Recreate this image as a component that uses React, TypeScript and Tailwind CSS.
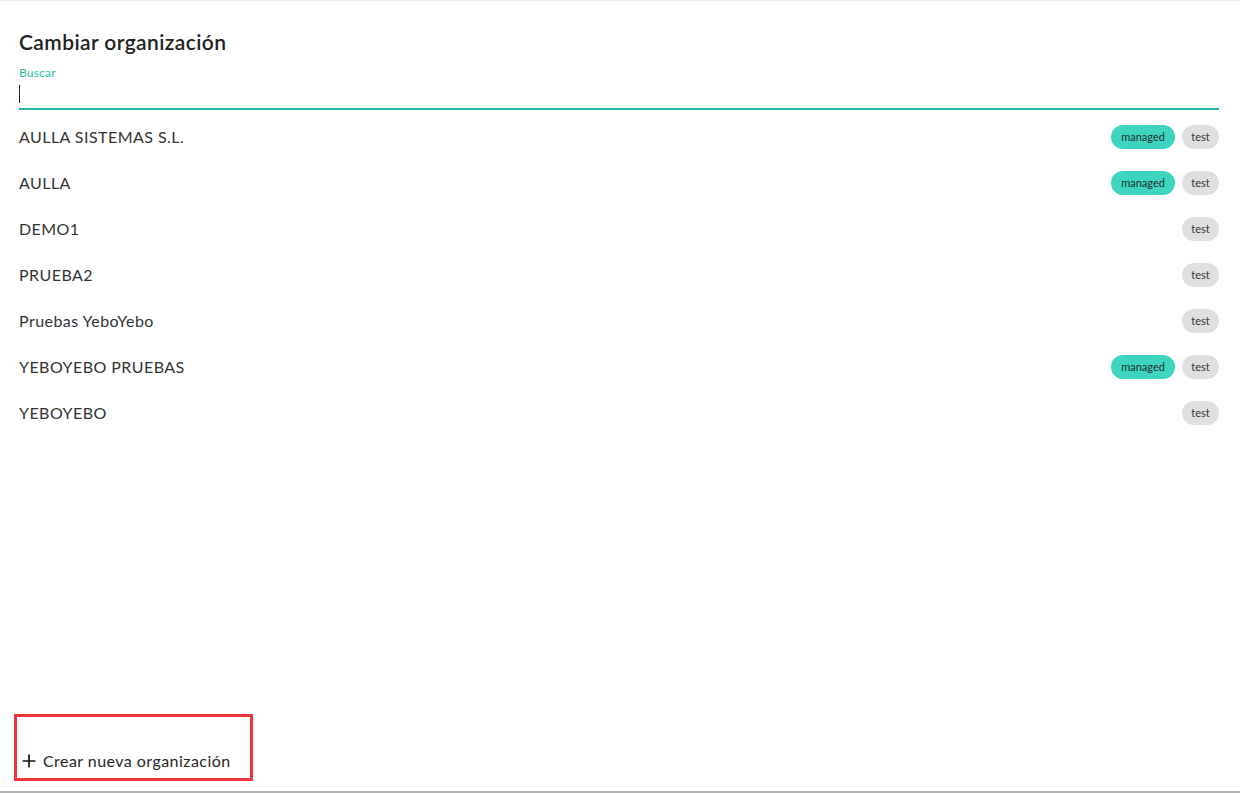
import { Plus } from "lucide-react";

const ORGS = [
  { name: "AULLA SISTEMAS S.L.", managed: true },
  { name: "AULLA", managed: true },
  { name: "DEMO1", managed: false },
  { name: "PRUEBA2", managed: false },
  { name: "Pruebas YeboYebo", managed: false },
  { name: "YEBOYEBO PRUEBAS", managed: true },
  { name: "YEBOYEBO", managed: false },
];

export default function App() {
  return (
    <div
      className="h-[794px] w-full flex flex-col bg-white text-[#262626] border-t border-[#ececec]"
      style={{ fontFamily: "Lato, 'Open Sans', sans-serif" }}
    >
      <div className="flex-1 flex flex-col pl-[19px] pr-[21px] pt-[28px]">
        {/* título */}
        <h1 className="text-[21px] font-semibold leading-[26px] tracking-[0.4px] text-[#222]">Cambiar organización</h1>

        {/* buscador */}
        <label className="mt-[11px] block">
          <span className="block text-[12px] leading-[14px] tracking-[0.2px] text-[#2bbfa9]">Buscar</span>
          <div className="h-[30px] border-b-2 border-[#26b5a3] flex items-center">
            <span className="w-px h-[18px] bg-[#222]" />
          </div>
        </label>

        {/* lista */}
        <ul className="mt-[4px]">
          {ORGS.map((org) => (
            <li key={org.name} className="h-[46px] flex items-center justify-between">
              <span className="text-[16px] tracking-[0.45px] text-[#333]">{org.name}</span>
              <div className="flex items-center gap-[7px]">
                {org.managed && (
                  <span className="h-[24px] w-[64px] rounded-full bg-[#3dd5c0] text-[11px] text-[#1f2f2c] flex items-center justify-center">
                    managed
                  </span>
                )}
                <span className="h-[24px] w-[37px] rounded-full bg-[#e0e0e0] text-[11px] text-[#333] flex items-center justify-center">
                  test
                </span>
              </div>
            </li>
          ))}
        </ul>

        <div className="flex-1" />

        {/* pie */}
        <div className="mb-[10px] -ml-[5px] w-[239px] h-[67px] border-[3px] border-[#ee3340] flex items-end pb-[5px] pl-[2px]">
          <button className="flex items-center gap-[4px] text-[16px] tracking-[0.45px] text-[#262626]">
            <Plus size={20} strokeWidth={2} className="text-[#111]" />
            Crear nueva organización
          </button>
        </div>
      </div>
      <div className="h-[2px] bg-[#b3b3b3] mb-px" />
    </div>
  );
}
